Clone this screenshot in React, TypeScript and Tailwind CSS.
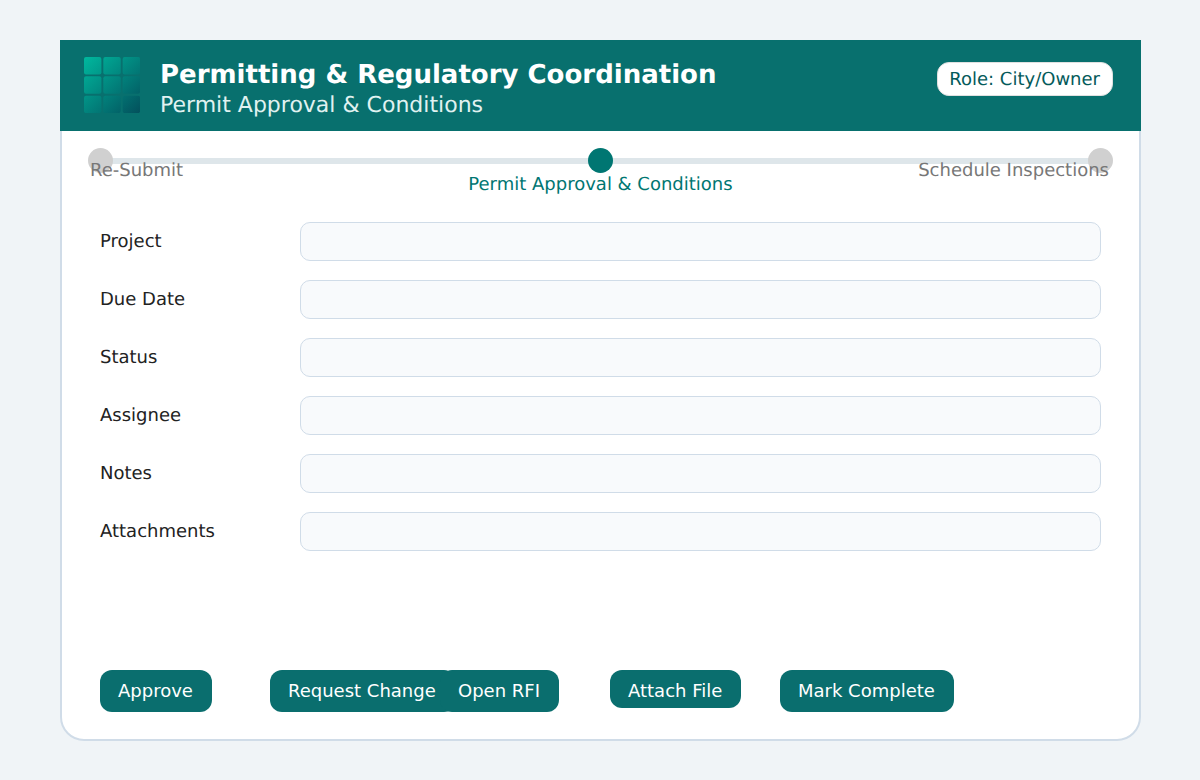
const fields = ["Project", "Due Date", "Status", "Assignee", "Notes", "Attachments"];

function Logo() {
  const cells = [0, 1, 2].flatMap((r) => [0, 1, 2].map((c) => ({ x: c * 19.33, y: r * 19.33 })));
  return (
    <svg width="56" height="56" viewBox="0 0 56 56" className="shrink-0 -mt-[2px]">
      <defs>
        <linearGradient id="logoGrad" gradientUnits="userSpaceOnUse" x1="0" y1="0" x2="56" y2="56">
          <stop offset="0" stopColor="#00b89e" />
          <stop offset="1" stopColor="#03505c" />
        </linearGradient>
      </defs>
      {cells.map((c, i) => (
        <rect key={i} x={c.x} y={c.y} width="17.4" height="17.4" rx="2" fill="url(#logoGrad)" />
      ))}
    </svg>
  );
}

function Btn({ label, className }: { label: string; className: string }) {
  return (
    <button className={"flex items-center rounded-[12px] bg-[#0a6e6e] text-white text-[18px] px-[18px] whitespace-nowrap " + className}>
      {label}
    </button>
  );
}

export default function App() {
  return (
    <div className="w-[1200px] h-[780px] bg-[#f0f4f7] pt-10 pl-[60px] font-['DejaVu_Sans',sans-serif] [text-rendering:geometricPrecision]">
      <div className="w-[1081px] h-[701px] bg-white border-2 border-[#d0dce8] rounded-[24px] flex flex-col relative">
        <header className="-mx-[2px] -mt-[2px] h-[91px] bg-[#08706e] flex items-center justify-between pl-6 pr-7">
          <div className="flex items-center gap-5">
            <Logo />
            <div className="flex flex-col pt-[6px]">
              <div className="text-white font-bold text-[26px] leading-[34px]">Permitting &amp; Regulatory Coordination</div>
              <div className="text-[#e0f2f1] text-[22px] leading-[28px]">Permit Approval &amp; Conditions</div>
            </div>
          </div>
          <div className="bg-white rounded-[12px] h-[34px] pl-[11px] pr-3 mb-[13px] flex items-center border border-[#e0e0e0] text-[#045a5a] text-[18px]">Role: City/Owner</div>
        </header>

        <div className="relative ml-[26px] w-[1025px] mt-[17px] h-[46px] grid grid-cols-3">
          <div className="absolute left-[12px] right-[12px] top-[10px] h-[6px] bg-[#dee6ea]" />
          <div className="relative flex flex-col items-start">
            <div className="w-[25px] h-[25px] rounded-full bg-[#d0d0d0]" />
            <div className="ml-[2px] -mt-[12px] text-[#777777] text-[18px] leading-[20px] whitespace-nowrap">Re-Submit</div>
          </div>
          <div className="relative flex flex-col items-center">
            <div className="w-[25px] h-[25px] rounded-full bg-[#007672]" />
            <div className="mt-[2px] text-[#007672] text-[18px] leading-[20px] whitespace-nowrap">Permit Approval &amp; Conditions</div>
          </div>
          <div className="relative flex flex-col items-end">
            <div className="w-[25px] h-[25px] rounded-full bg-[#d0d0d0]" />
            <div className="mr-[4px] -mt-[12px] text-[#777777] text-[18px] leading-[20px] whitespace-nowrap">Schedule Inspections</div>
          </div>
        </div>

        <div className="ml-[38px] mt-[28px] flex flex-col gap-[19px]">
          {fields.map((f) => (
            <div key={f} className="flex items-center h-[39px]">
              <div className="w-[200px] text-[#222222] text-[18px]">{f}</div>
              <div className="w-[801px] h-[39px] bg-[#f8fafc] border border-[#d0dce8] rounded-[10px]" />
            </div>
          ))}
        </div>

        <div className="ml-[38px] mt-[119px] flex items-start">
          <Btn label="Approve" className="w-[112px] h-[42px] pb-[2px]" />
          <Btn label="Request Change" className="ml-[58px] w-[186px] h-[42px] pb-[2px]" />
          <Btn label="Open RFI" className="-ml-[16px] w-[119px] h-[42px] pb-[2px]" />
          <Btn label="Attach File" className="ml-[51px] w-[131px] h-[38px] pt-[2px]" />
          <Btn label="Mark Complete" className="ml-[39px] w-[174px] h-[42px] pb-[2px]" />
        </div>
      </div>
    </div>
  );
}
